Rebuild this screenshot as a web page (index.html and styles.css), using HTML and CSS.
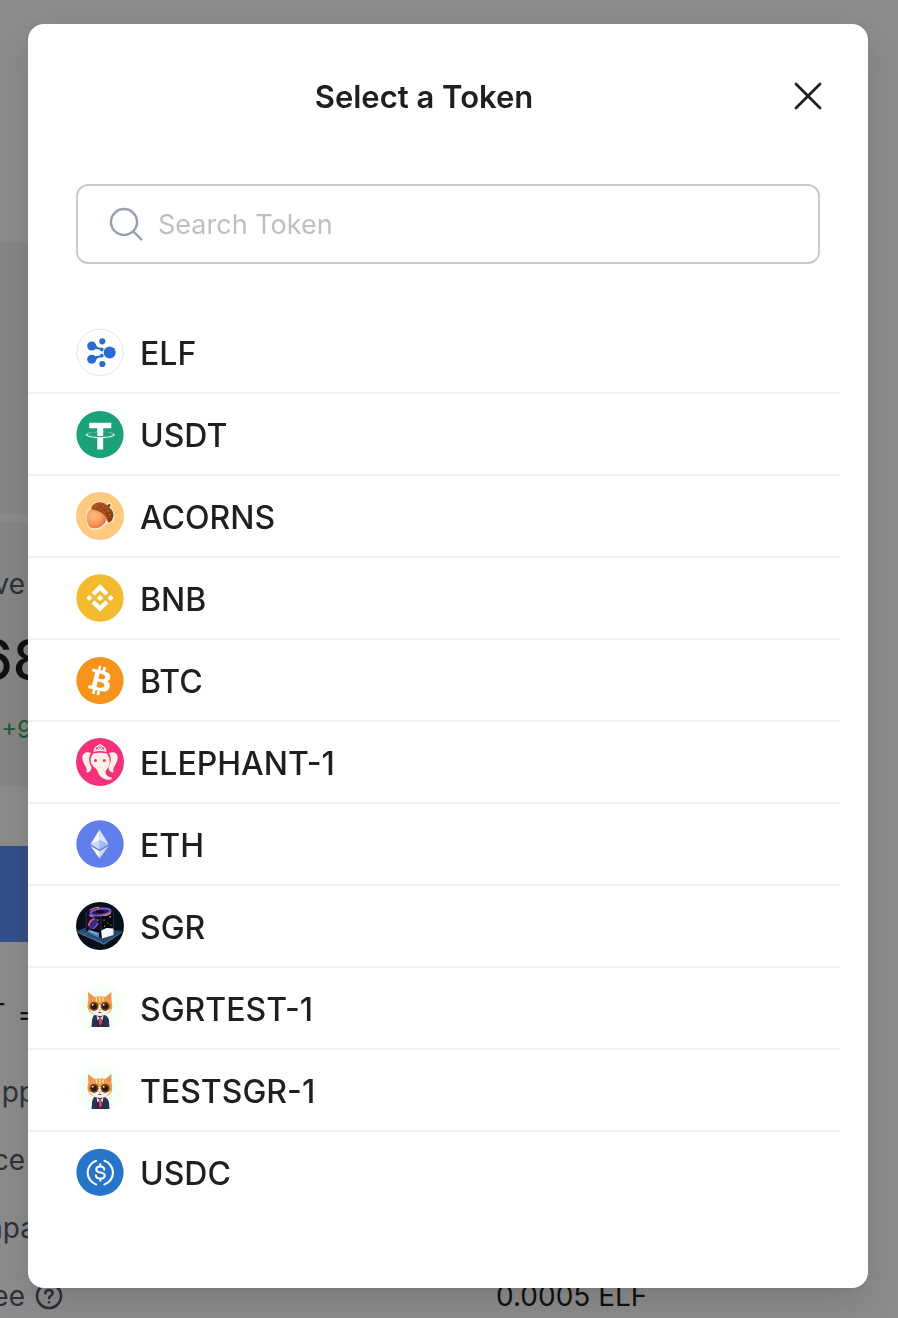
FILE: index.html
```html
<!DOCTYPE html>
<html lang="en">
<head>
<meta charset="utf-8">
<meta name="viewport" content="width=device-width, initial-scale=1">
<title>Select a Token</title>
<link rel="stylesheet" href="styles.css">
</head>
<body>
<main class="page" aria-hidden="true">
  <section class="panel panel-top"></section>
  <section class="panel panel-amount">
    <div class="edge edge-short muted">ve</div>
    <div class="edge edge-wide amount">68</div>
    <div class="edge edge-mid gain">+9</div>
  </section>
  <div class="action"></div>
  <div class="rate"><span class="edge edge-long"><span>T</span><span>=</span></span></div>
  <div class="detail"><span class="edge edge-long muted">pp</span></div>
  <div class="detail"><span class="edge edge-short muted">ce</span></div>
  <div class="detail"><span class="edge edge-long muted">mpa</span></div>
  <div class="detail">
    <span class="detail-label">
      <span class="edge edge-short muted">ee</span>
      <svg class="help" viewBox="0 0 28 28" fill="none" stroke="#545a66" stroke-width="2.6" stroke-linecap="round"><circle cx="14" cy="14" r="12"/><path d="M10.4 11.2c.2-4.2 7.2-4.2 7.2 0 0 2.6-3.5 2.6-3.5 5"/><path d="M14 20.2v.1"/></svg>
    </span>
    <span class="value">0.0005 ELF</span>
  </div>
</main>

<div class="mask">
  <div class="modal" role="dialog" aria-modal="true" aria-labelledby="modal-title">
    <header class="modal-header">
      <h2 class="modal-title" id="modal-title">Select a Token</h2>
      <button class="close" type="button" aria-label="Close">
        <svg width="28" height="28" viewBox="0 0 28 28" fill="none" stroke="#1f1f1f" stroke-width="2.8" stroke-linecap="round"><path d="M2 2l24 24M26 2L2 26"/></svg>
      </button>
    </header>

    <label class="search">
      <svg width="36" height="36" viewBox="0 0 36 36" fill="none" stroke="#989fb2" stroke-width="2.4" stroke-linecap="round"><circle cx="16" cy="16" r="13"/><path d="M25.3 25.3l8 8"/></svg>
      <input class="search-input" type="text" placeholder="Search Token" aria-label="Search Token">
    </label>

    <ul class="tokens">
      <li class="token"><button class="token-button" type="button">
        <svg class="token-icon" viewBox="0 0 48 48"><circle cx="24" cy="24.3" r="23.2" fill="#fff" stroke="#e3e5eb"/><g fill="#266cd3"><circle cx="33.700" cy="24.600" r="6"/><circle cx="15.700" cy="18" r="4.500"/><circle cx="15.700" cy="31.300" r="4.500"/><circle cx="26.300" cy="13.300" r="3.100"/><circle cx="26.300" cy="36" r="3.100"/><circle cx="25.700" cy="21.500" r="1.900"/><circle cx="25.700" cy="27.700" r="1.900"/><path d="M19 16.500q2 3 6.500 3.700v2q-4-1.500-8-1zM19 32.800q2-3 6.500-3.700v-2q-4 1.500-8 1z"/></g></svg>
        <span class="token-name">ELF</span></button></li>
      <li class="token"><button class="token-button" type="button">
        <svg class="token-icon" viewBox="0 0 48 48"><circle cx="24" cy="24.500" r="23.600" fill="#1ba27a"/><path fill="#fff" transform="translate(.3 1) scale(1.500)" d="M17.922 17.383v-.002c-.11.008-.677.042-1.942.042-1.010 0-1.721-.03-1.971-.042v.003c-3.888-.171-6.790-.848-6.790-1.658 0-.809 2.902-1.486 6.790-1.660v2.644c.254.018.982.061 1.988.061 1.207 0 1.812-.05 1.925-.06v-2.643c3.880.173 6.775.850 6.775 1.658 0 .810-2.895 1.485-6.775 1.657m0-3.590v-2.366h5.414V7.819H8.595v3.608h5.414v2.365c-4.400.202-7.709 1.074-7.709 2.118 0 1.044 3.309 1.915 7.709 2.118v7.582h3.913v-7.584c4.393-.202 7.694-1.073 7.694-2.116 0-1.043-3.301-1.914-7.694-2.117"/></svg>
        <span class="token-name">USDT</span></button></li>
      <li class="token"><button class="token-button" type="button">
        <svg class="token-icon" viewBox="0 0 48 48"><defs><radialGradient id="nut" cx=".35" cy=".4" r=".7"><stop offset="0" stop-color="#ffc080"/><stop offset=".55" stop-color="#fa9a5e"/><stop offset="1" stop-color="#dc6a35"/></radialGradient><linearGradient id="cap" x1="0" y1="0" x2="1" y2="1"><stop offset="0" stop-color="#b0531f"/><stop offset="1" stop-color="#7d3417"/></linearGradient></defs><circle cx="24" cy="24" r="24" fill="#ffca80"/><path d="M16 14.500C10 19 9.500 26 12 32q.7 4 3 4.500c5 1 10 0 13-3.500l3-2c5 0 7-4 6.500-9-.5-3-1-5-3.500-6.500l1.300-3.100-2-1.800-2.300 2.400C25 8.500 18 9.500 16 14.500z" fill="#ffe8cd" stroke="#ffe8cd" stroke-width="1.500"/><path d="M15.500 16C10 20 9.500 27 12.300 32.500q.7 3 3 3.200C22 37.500 29 34 31 26L25 17z" fill="url(#nut)"/><path d="M15.400 15.500C18 9 27 9 31.300 13.200l2-1.600 1.500 1.300-1.500 2.500c4.500 3.500 5 8 3 12.200-1 2-2.500 3-4.300 2.800C31 23.500 25 18.500 15.600 17.200z" fill="url(#cap)"/><path d="M19 12l8 7 5 9M24 11l7 6 4 9M29 12l6 8M19 16l4-5M24 18l5-6M28 21l5-5M31 26l5-5" fill="none" stroke="#c9733c" stroke-width=".7" stroke-dasharray="2 1.500"/></svg>
        <span class="token-name">ACORNS</span></button></li>
      <li class="token"><button class="token-button" type="button">
        <svg class="token-icon" viewBox="0 0 48 48"><circle cx="24" cy="24" r="23.700" fill="#f3ba2f"/><path fill="#fff" transform="translate(1.900 1.900) scale(1.380)" d="M12.116 14.404L16 10.520l3.886 3.886 2.260-2.260L16 6l-6.144 6.144 2.260 2.260zM6 16l2.260-2.260L10.520 16l-2.260 2.260L6 16zm6.116 1.596L16 21.480l3.886-3.886 2.260 2.259L16 26l-6.144-6.144-.003-.003 2.263-2.257zM21.480 16l2.260-2.260L26 16l-2.260 2.260L21.480 16zm-3.188-.002h.002V16L16 18.294l-2.291-2.290-.004-.004.004-.003.401-.402.195-.195L16 13.706l2.293 2.293z"/></svg>
        <span class="token-name">BNB</span></button></li>
      <li class="token"><button class="token-button" type="button">
        <svg class="token-icon" viewBox="0 0 48 48"><circle cx="24" cy="24.500" r="23.600" fill="#f7931a"/><path fill="#fff" transform="translate(-.5 .5) scale(1.500)" d="M23.189 14.020c.314-2.096-1.283-3.223-3.465-3.975l.708-2.840-1.728-.430-.690 2.765c-.454-.114-.920-.220-1.385-.326l.695-2.783L15.596 6l-.708 2.839c-.376-.086-.746-.170-1.104-.260l.002-.009-2.384-.595-.460 1.846s1.283.294 1.256.312c.700.175.826.638.805 1.006l-.806 3.235c.048.012.110.030.180.057l-.183-.045-1.130 4.532c-.086.212-.303.531-.793.410.018.025-1.256-.313-1.256-.313l-.858 1.978 2.250.561c.418.105.828.215 1.231.318l-.715 2.872 1.727.430.708-2.840c.472.127.930.245 1.378.357l-.706 2.828 1.728.430.715-2.866c2.948.558 5.164.333 6.097-2.333.752-2.146-.037-3.385-1.588-4.192 1.130-.260 1.980-1.003 2.207-2.538zm-3.950 5.538c-.533 2.147-4.148.986-5.320.695l.950-3.805c1.172.293 4.929.872 4.370 3.110zm.535-5.569c-.487 1.953-3.495.960-4.470.717l.860-3.450c.975.243 4.118.696 3.610 2.733z"/></svg>
        <span class="token-name">BTC</span></button></li>
      <li class="token"><button class="token-button" type="button">
        <svg class="token-icon" viewBox="0 0 48 48"><circle cx="24" cy="24" r="24" fill="#f7307c"/><g fill="#fff1e6"><path d="M15 14.800C10 13 6 15.500 6.400 20c.3 5 2.600 6.500 4 10 .7 1.800.3 3.500 0 4.300 3 .5 4.800-1.300 5.200-5C12.700 25 12.300 20 15 14.800z"/><path d="M33 14.800c5.500-1.800 9 .7 8.600 5.200-.3 5-2.600 6.500-4 10-.7 1.800-.3 3.500 0 4.300-3 .5-4.800-1.300-5.200-5 2.800-4.300 3.200-9.300.6-14.500z"/><path d="M17.200 15.500q6.800-1.500 13.600 0c4 5.500 3.800 11.500.3 15.500-1.400 1.400-2 3-1.200 4.800 1 2.400 3 3.600 5.800 3.400v2.400c-6.200.8-11.200-1.700-13.500-6.700-1-2.300-1-3.600-3.300-5.200-4.800-3.500-5.700-9-1.700-14.200z"/><path d="M17.600 13.700c-.2-2.500 1-4.600 2.800-5.500L24 5.800l3.600 2.400c1.800.9 3 3 2.800 5.500q-6.400-1.300-12.800 0z"/></g><path d="M20 12.200l1-3 1.500 2.800M25.500 12l1.500-2.800 1 3M22.500 9L24 7.500 25.500 9 24 10.500z" fill="none" stroke="#f7307c" stroke-width=".9"/><circle cx="19.500" cy="22.400" r="1.500" fill="#f7307c"/><circle cx="28.300" cy="22.400" r="1.500" fill="#f7307c"/></svg>
        <span class="token-name">ELEPHANT-1</span></button></li>
      <li class="token"><button class="token-button" type="button">
        <svg class="token-icon" viewBox="0 0 48 48"><circle cx="24" cy="24" r="23.700" fill="#627eea"/><path d="M23.600 9.600v10.700l9 4z" fill="#fff" opacity=".8"/><path d="M23.600 9.600l-9 14.700 9-4z" fill="#fff"/><path d="M23.600 20.300v9.400l9-5.400z" fill="#fff" opacity=".45"/><path d="M14.600 24.300l9 5.400v-9.400z" fill="#fff" opacity=".7"/><path d="M23.600 31.300v7.200l9-12.500z" fill="#fff" opacity=".7"/><path d="M23.600 38.500v-7.200L14.600 26z" fill="#fff"/></svg>
        <span class="token-name">ETH</span></button></li>
      <li class="token"><button class="token-button" type="button">
        <svg class="token-icon" viewBox="0 0 48 48"><defs><clipPath id="round"><circle cx="24" cy="24" r="24"/></clipPath></defs><g clip-path="url(#round)"><path d="M0 0h48v48H0z" fill="#06101b"/><path d="M0 29l12-4 34 4-18 14z" fill="#27486b"/><path d="M1 30l27 12 18-12" fill="none" stroke="#6a93bb" stroke-width=".8"/><path d="M6 30l20 10M11 28l17 8M6 34l10-6" fill="none" stroke="#466d94" stroke-width=".6"/><path d="M10 9.500l14-5.500 13.500 5v18L26 36 10 28z" fill="#050308"/><path d="M10 9.500l14-5.500 13.500 5L25 15z" fill="#2a1a4e"/><path d="M10 9.500l15 5.500v14l-15-3z" fill="#120b24"/><ellipse cx="24.500" cy="10" rx="10" ry="3.300" transform="rotate(-8 24.500 10)" fill="none" stroke="#7a55c4" stroke-width="2"/><ellipse cx="24" cy="9.500" rx="4" ry="1.500" fill="#0b0612"/><path d="M14 8q5-3 9-2.500M27 13.500q5 0 8-3" fill="none" stroke="#e8795a" stroke-width="1.200"/><path d="M14 28q-4-6 3-11 5-2 5 2-1 6-8 9z" fill="#3b2b86"/><path d="M12.500 24q1-6 6-7.500" fill="none" stroke="#d96a66" stroke-width="1.600"/><path d="M17 27q4-3 5-6" fill="none" stroke="#8d64dd" stroke-width="1.300"/><path d="M13 13l5 2" stroke="#8458d0" stroke-width="1.500"/><path d="M25 28.500l5.500-2.500 7 .5v6.500L26 36.500z" fill="#f1f8ff"/><path d="M12 27.500l11 3v5.500L12 30.500z" fill="#4a7db0"/><path d="M14 29l8 3.500" stroke="#9cc4e8" stroke-width="1"/><path d="M25.200 15.200V29M37.300 9.500V27M10.200 10v17" fill="none" stroke="#4b4a78" stroke-width=".6"/><g fill="#fff"><circle cx="28" cy="18" r=".6"/><circle cx="34" cy="15" r=".7"/><circle cx="32" cy="21" r=".5"/><circle cx="28.500" cy="24" r=".6"/><circle cx="35" cy="23" r=".5"/><circle cx="15" cy="14" r=".6"/><circle cx="22" cy="18" r=".6"/></g></g></svg>
        <span class="token-name">SGR</span></button></li>
      <li class="token"><button class="token-button" type="button">
        <svg class="token-icon" viewBox="0 0 48 48"><defs><g id="cat"><circle cx="24" cy="24" r="24" fill="#f5fff8"/><path d="M18.500 31h10c3 1 4.300 3.500 4.500 6l.5 6h-18l.5-6c.2-2.500 1-5 2.500-6z" fill="#28334f"/><path d="M20 33l4 3 4-3-1 10h-6z" fill="#352440"/><path d="M20.500 31.500L24 34l-2.500 2.500zM27.500 31.500L24 34l2.500 2.500z" fill="#dce4f4"/><path d="M23 34h2.200l1 5-2.100 3-1.100-3z" fill="#d0496f"/><path d="M12.300 17l-.3-9 6.500 5q5.500-1.500 10.500 0l6.500-5v9q2 6.500-1 10.500L29.500 31l-5.500 1.300-5.500-1.300-5.300-3.500q-3-4-.9-10.500z" fill="#f39d43"/><path d="M13 10.500l.7 5.500 3-2.500zM34.500 10.500l-.7 5.500-3-2.500z" fill="#ef7f8b"/><path d="M20.500 13.500v4M23.800 13v5M27 13.500v4" stroke="#ffe3a2" stroke-width="1.400"/><path d="M13.200 26l8.800-5h3.500l9 5-5 4.700-5.500 1.300-5.500-1.300z" fill="#fff1e5"/><circle cx="18" cy="22.300" r="4.600" fill="#7d471f"/><circle cx="29.200" cy="22.300" r="4.600" fill="#7d471f"/><circle cx="18" cy="22.300" r="2.900" fill="#211a18"/><circle cx="29.200" cy="22.300" r="2.900" fill="#211a18"/><path d="M16 20h1.500v1.500H16zM27 20h1.500v1.500H27z" fill="#fff"/><path d="M22.500 25.500H25l-1.200 1.500z" fill="#d7656b"/><path d="M22.300 28.500h3" stroke="#74404b"/></g></defs><use href="#cat"/></svg>
        <span class="token-name">SGRTEST-1</span></button></li>
      <li class="token"><button class="token-button" type="button">
        <svg class="token-icon" viewBox="0 0 48 48"><use href="#cat"/></svg>
        <span class="token-name">TESTSGR-1</span></button></li>
      <li class="token"><button class="token-button" type="button">
        <svg class="token-icon" viewBox="0 0 48 48"><circle cx="24" cy="24.300" r="23.600" fill="#2775ca"/><g fill="none" stroke="#fff" stroke-width="2.100" stroke-linecap="round"><path d="M20.200 12.800a12.400 12.400 0 0 0 0 23.600M28.400 12.800a12.400 12.400 0 0 1 0 23.600"/><path d="M28.300 21.600c-.4-4.200-8-4-8-.2 0 4.600 8.500 1.800 8.500 6.200 0 4.100-8.700 4.100-9-.4M24.300 16.300v2.100M24.300 30.800v2"/></g></svg>
        <span class="token-name">USDC</span></button></li>
    </ul>
  </div>
</div>
</body>
</html>
```
FILE: styles.css
```css
* { box-sizing: border-box; }

body {
  margin: 0;
  height: 100vh;
  overflow: hidden;
  background: #fff;
  color: #1f1f1f;
  font-family: Inter, "Liberation Sans", sans-serif;
  font-size: 28px;
}

/* Page behind the dialog, scrolled past its left edge */
.page {
  height: 100vh;
  padding: 242px 40px 0 0;
  overflow: hidden;
}

.panel { background: #f4f4f4; }
.panel-top { height: 272px; }

.panel-amount {
  height: 264px;
  margin-top: 8px;
  padding-top: 40px;
}

.edge {
  display: flex;
  justify-content: flex-end;
  gap: 12px;
  white-space: nowrap;
}

.edge-short { width: 25px; }
.edge-mid { width: 32px; }
.edge-long { width: 36px; }
.edge-wide { width: 48px; }

.muted {
  color: #545a66;
  line-height: 44px;
}

.amount {
  font-size: 56px;
  font-weight: 500;
  line-height: 108px;
}

.gain {
  color: #2faa5b;
  font-size: 24px;
  line-height: 32px;
}

.action {
  height: 96px;
  margin-top: 60px;
  background: #5f93fc;
}

.rate,
.detail {
  display: grid;
  grid-template-columns: 1fr 362px;
  align-items: center;
  height: 68px;
}

.rate {
  margin-top: 38px;
  margin-bottom: 10px;
}

.detail-label {
  display: flex;
  align-items: center;
  gap: 10px;
}

.help {
  width: 28px;
  height: 28px;
}

/* Dialog */
.mask {
  position: fixed;
  inset: 0;
  overflow: auto;
  padding: 24px 30px 30px 28px;
  background: rgba(0, 0, 0, 0.45);
}

.modal {
  padding-bottom: 76px;
  background: #fff;
  border-radius: 16px;
  box-shadow:
    0 12px 32px rgba(0, 0, 0, 0.08),
    0 6px 12px -8px rgba(0, 0, 0, 0.12),
    0 18px 56px 16px rgba(0, 0, 0, 0.05);
}

.modal-header {
  display: flex;
  align-items: center;
  padding: 32px 20px 48px 52px;
}

.modal-title {
  flex: 1;
  margin: 0;
  padding-top: 2px;
  font-size: 31px;
  font-weight: 600;
  line-height: 78px;
  text-align: center;
}

.close {
  display: flex;
  align-items: center;
  justify-content: center;
  width: 80px;
  height: 80px;
  padding: 0;
  border: 0;
  background: none;
  cursor: pointer;
}

.search {
  display: flex;
  align-items: center;
  gap: 14px;
  height: 80px;
  margin: 0 48px;
  padding: 0 30px;
  border: 2px solid #c5cad5;
  border-radius: 12px;
}

.search-input {
  flex: 1;
  min-width: 0;
  padding: 0;
  border: 0;
  outline: 0;
  background: none;
  color: inherit;
  font: inherit;
  font-size: 27px;
}

.search-input::placeholder { color: #bfbfbf; }

.tokens {
  margin: 48px 28px 0 0;
  padding: 0;
  list-style: none;
}

.token + .token { border-top: 2px solid #f0f0f0; }

.token-button {
  display: flex;
  align-items: center;
  gap: 16px;
  width: 100%;
  height: 80px;
  padding: 0 48px;
  border: 0;
  background: none;
  color: inherit;
  font: inherit;
  font-size: 32px;
  font-weight: 550;
  text-align: left;
  cursor: pointer;
}

.token-icon {
  width: 48px;
  height: 48px;
}

.token-name { padding-top: 2px; }
```
